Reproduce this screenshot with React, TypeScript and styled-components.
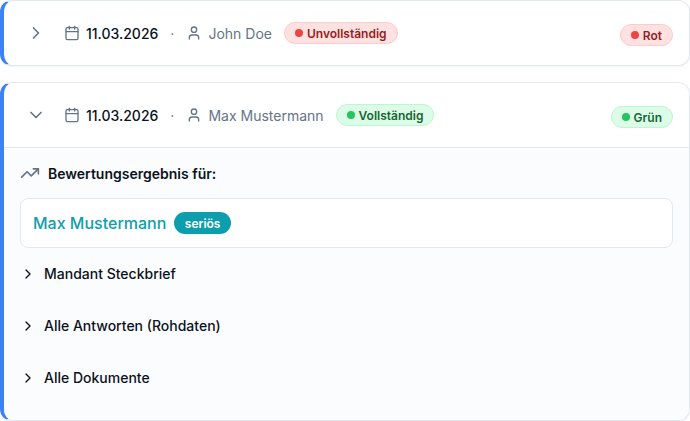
import * as React from "react"
import styled, { createGlobalStyle } from "styled-components"
import { Calendar, ChevronDown, ChevronRight, TrendingUp, User } from "lucide-react"

const GlobalStyle = createGlobalStyle`
  html, body {
    margin: 0;
    padding: 0;
    background: #fff;
    font-family: Inter, "Liberation Sans", sans-serif;
  }
  * {
    box-sizing: border-box;
  }
`

const Page = styled.div`
  display: flex;
  flex-direction: column;
  gap: 16px;
  width: 690px;
`

const Card = styled.div`
  background: #fff;
  border: 1px solid #e2e8f0;
  border-left: 4px solid #3b82f6;
  border-radius: 12px;
  box-shadow: 0 1px 2px rgba(15, 23, 42, 0.05);
  overflow: hidden;
`

const Header = styled.div<{ $open?: boolean }>`
  display: flex;
  align-items: center;
  justify-content: space-between;
  height: ${p => (p.$open ? "65px" : "64px")};
  padding: 0 16px 0 22px;
  border-bottom: ${p => (p.$open ? "1px solid #e2e8f0" : "none")};
`

const HeaderLeft = styled.div`
  display: flex;
  align-items: center;
`

const Toggle = styled.span`
  display: flex;
  color: #64748b;
  margin-right: 18px;
`

const DateText = styled.span`
  display: flex;
  align-items: center;
  gap: 6px;
  color: #0b1220;
  font-size: 14px;
  font-weight: 500;
  svg {
    color: #64748b;
  }
`

const Dot = styled.span`
  color: #64748b;
  font-size: 14px;
  margin: 0 12px;
`

const Person = styled.span`
  display: flex;
  align-items: center;
  gap: 6px;
  color: #64748b;
  font-size: 14px;
  svg {
    color: #64748b;
  }
`

const TONES = {
  red: { bg: "#fee2e2", border: "#fecaca", text: "#991b1b", dot: "#ef4444" },
  green: { bg: "#dcfce7", border: "#bbf7d0", text: "#166534", dot: "#22c55e" },
}

type Tone = keyof typeof TONES

const Badge = styled.span<{ $tone: Tone; $raised?: boolean }>`
  display: inline-flex;
  align-items: center;
  gap: 4px;
  height: 22px;
  padding: 0 10px;
  margin-left: ${p => (p.$raised ? "0" : "12px")};
  margin-top: ${p => (p.$raised ? "4px" : "0")};
  background: ${p => TONES[p.$tone].bg};
  border: 1px solid ${p => TONES[p.$tone].border};
  border-radius: 999px;
  color: ${p => TONES[p.$tone].text};
  font-size: 12px;
  font-weight: 600;
  &::before {
    content: "";
    width: 8px;
    height: 8px;
    border-radius: 50%;
    background: ${p => TONES[p.$tone].dot};
  }
`

const Body = styled.div`
  display: flex;
  flex-direction: column;
  padding: 15px 16px 0;
  background: #fbfcfe;
  height: 272px;
`

const ResultTitle = styled.div`
  display: flex;
  align-items: center;
  gap: 8px;
  color: #0b1220;
  font-size: 14px;
  font-weight: 600;
  height: 20px;
  margin-bottom: 15px;
  svg {
    color: #64748b;
  }
`

const ResultBox = styled.div`
  display: flex;
  align-items: center;
  gap: 8px;
  height: 50px;
  padding: 0 12px;
  background: #fff;
  border: 1px solid #e2e8f0;
  border-radius: 8px;
`

const ResultName = styled.span`
  color: #0d9ead;
  font-size: 16px;
  font-weight: 500;
`

const Tag = styled.span`
  display: inline-flex;
  align-items: center;
  height: 22px;
  padding: 0 10.5px;
  background: #0d9ead;
  border-radius: 999px;
  color: #fff;
  font-size: 12px;
  font-weight: 600;
`

const Section = styled.div`
  display: flex;
  align-items: center;
  gap: 8px;
  height: 52px;
  padding-bottom: 1px;
  color: #0b1220;
  font-size: 14px;
  font-weight: 500;
  svg {
    flex: none;
  }
`

const SectionList = styled.div`
  display: flex;
  flex-direction: column;
`

export default function App() {
  return (
    <Page>
      <GlobalStyle />
      <Card>
        <Header>
          <HeaderLeft>
            <Toggle>
              <ChevronRight size={20} />
            </Toggle>
            <DateText>
              <Calendar size={16} />
              11.03.2026
            </DateText>
            <Dot>·</Dot>
            <Person>
              <User size={16} />
              John Doe
            </Person>
            <Badge $tone="red">Unvollständig</Badge>
          </HeaderLeft>
          <Badge $tone="red" $raised>
            Rot
          </Badge>
        </Header>
      </Card>
      <Card>
        <Header $open>
          <HeaderLeft>
            <Toggle>
              <ChevronDown size={20} />
            </Toggle>
            <DateText>
              <Calendar size={16} />
              11.03.2026
            </DateText>
            <Dot>·</Dot>
            <Person>
              <User size={16} />
              Max Mustermann
            </Person>
            <Badge $tone="green">Vollständig</Badge>
          </HeaderLeft>
          <Badge $tone="green" $raised>
            Grün
          </Badge>
        </Header>
        <Body>
          <ResultTitle>
            <TrendingUp size={20} />
            Bewertungsergebnis für:
          </ResultTitle>
          <ResultBox>
            <ResultName>Max Mustermann</ResultName>
            <Tag>seriös</Tag>
          </ResultBox>
          <SectionList>
            <Section>
              <ChevronRight size={16} />
              Mandant Steckbrief
            </Section>
            <Section>
              <ChevronRight size={16} />
              Alle Antworten (Rohdaten)
            </Section>
            <Section>
              <ChevronRight size={16} />
              Alle Dokumente
            </Section>
          </SectionList>
        </Body>
      </Card>
    </Page>
  )
}
